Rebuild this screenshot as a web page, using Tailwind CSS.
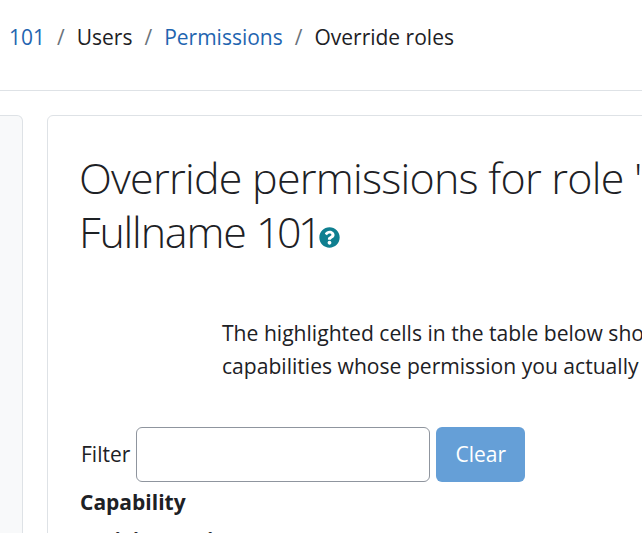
<!DOCTYPE html>
<html lang="en">
  <head>
    <meta charset="UTF-8" />
    <title>Override roles</title>
    <script src="https://cdn.jsdelivr.net/npm/@tailwindcss/browser@4"></script>
  </head>
  <body class="h-[533px] w-[642px] overflow-hidden bg-white font-['Open_Sans',sans-serif] text-[#1d2125]">
    <!-- breadcrumb -->
    <nav class="flex h-[91px] items-start border-b border-[#dee2e6] pl-[9px] pt-[22px] text-[21px] leading-[30px] whitespace-nowrap">
      <a href="#" class="text-[#1f65b0]">101</a>
      <span class="px-[12px] text-[#6a737b]">/</span>
      <span>Users</span>
      <span class="px-[12px] text-[#6a737b]">/</span>
      <a href="#" class="text-[#1f65b0]">Permissions</a>
      <span class="px-[12px] text-[#6a737b]">/</span>
      <span>Override roles</span>
    </nav>

    <div class="flex gap-[24px] pt-[24px]">
      <!-- side block, mostly off screen -->
      <aside class="h-[500px] w-[23px] shrink-0 rounded-r-[6px] border border-l-0 border-[#dee2e6] bg-[#f8f9fa]"></aside>

      <main class="h-[500px] w-[1000px] shrink-0 rounded-[6px] border border-[#dee2e6] bg-white pl-[31px] pt-[35px]">
        <h2 class="w-[850px] text-[43px] leading-[54px] font-light tracking-[-0.75px]">
          Override permissions for role "Student" in <span class="tracking-[-1.2px]">Fullname</span> <span class="tracking-[-3.5px]">101</span><a href="#" class="inline-block align-[0px]"
            ><svg width="21" height="21" viewBox="0 0 512 512" fill="#0f7f90">
              <path d="M504 256c0 136.997-111.043 248-248 248S8 392.997 8 256C8 119.083 119.043 8 256 8s248 111.083 248 248zM262.655 90c-54.497 0-89.255 22.957-116.549 63.758-3.536 5.286-2.353 12.415 2.715 16.258l34.699 26.310c5.205 3.947 12.621 3.008 16.665-2.122 17.864-22.658 30.113-35.797 57.303-35.797 20.429 0 45.698 13.148 45.698 32.958 0 14.976-12.363 22.667-32.534 33.976C247.128 238.528 216 254.941 216 296v4c0 6.627 5.373 12 12 12h56c6.627 0 12-5.373 12-12v-1.333c0-28.462 83.186-29.647 83.186-106.667 0-58.002-60.165-102-116.531-102zM256 338c-25.365 0-46 20.635-46 46 0 25.364 20.635 46 46 46s46-20.636 46-46c0-25.365-20.635-46-46-46z" />
            </svg></a>
        </h2>

        <p class="ml-[143px] mt-[57px] w-[620px] text-[21.1px] leading-[33px]">
          The highlighted cells in the table below show the<br />capabilities whose permission you actually can change.
        </p>

        <div class="mt-[45px] ml-[2px] flex items-center">
          <label class="mr-[6px] text-[21px]">Filter</label>
          <input type="text" class="h-[55px] w-[294px] rounded-[6px] border border-[#8f959e] bg-white" />
          <button class="ml-[6px] h-[55px] w-[89px] rounded-[6px] bg-[#659fd7] text-[21px] text-white">Clear</button>
        </div>

        <p class="ml-[1px] mt-[4px] text-[21px] leading-[33px] font-bold">Capability</p>
        <p class="ml-[1px] mt-[5px] text-[21px] leading-[33px] font-bold">Activity: Assignment</p>
      </main>
    </div>
  </body>
</html>
